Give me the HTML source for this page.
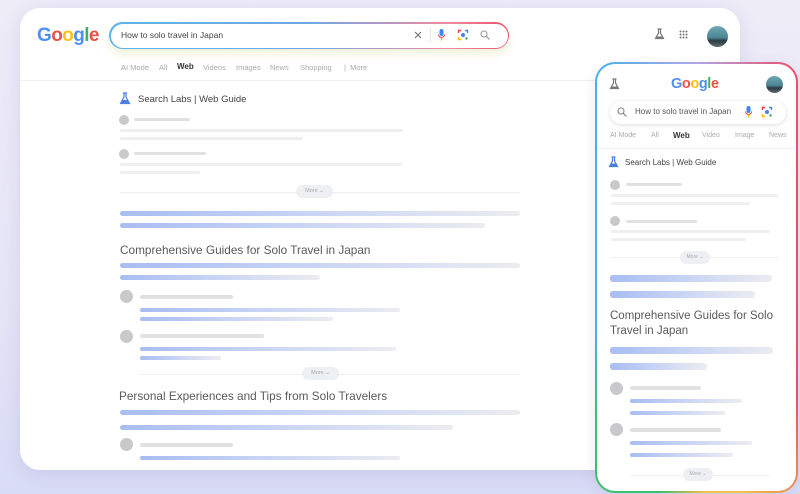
<!DOCTYPE html>
<html><head><meta charset="utf-8"><style>
*{margin:0;padding:0;box-sizing:border-box}
body{width:800px;height:494px;overflow:hidden;position:relative;font-family:"Liberation Sans",sans-serif;background:linear-gradient(180deg,#eeecf7 0%,#e6e5f6 60%,#d9dcf6 100%)}
.a{position:absolute}
.card{left:20px;top:8px;width:720px;height:462px;background:#fff;border-radius:20px;box-shadow:0 4px 18px rgba(120,110,190,.18)}
.b{position:absolute;height:5px;border-radius:3px;background:linear-gradient(90deg,#a8bdf2 0%,#c7d3f6 45%,#ececf0 100%)}
.pb{height:7px}
.g{position:absolute;height:4px;border-radius:2px;background:#e1e1e1}
.gl{position:absolute;height:3px;border-radius:2px;background:#efefef}
.c{position:absolute;border-radius:50%;background:#c9c9cb}
.t{position:absolute;white-space:nowrap;color:#aaa;font-size:7.5px}
.h{position:absolute;white-space:nowrap;color:#5a5a5a}
.more{position:absolute;height:13px;border-radius:7px;background:#eeeff2;color:#aaa;font-size:5.5px;text-align:center;line-height:13px}
.line{position:absolute;height:1px;background:#eeeeee}
.goog span{font-weight:bold}
</style></head><body>
<div class="a card"></div>

<div class="a goog" style="left:37px;top:25px;font-size:19px;letter-spacing:-0.6px;opacity:.92"><span style="color:#4285f4">G</span><span style="color:#ea4335">o</span><span style="color:#fbbc05">o</span><span style="color:#4285f4">g</span><span style="color:#34a853">l</span><span style="color:#ea4335">e</span></div>

<div class="a" style="left:109px;top:22px;width:400px;height:27px;border-radius:14px;background:linear-gradient(90deg,#5bb3ea,#6fa8e8 50%,#f08aa0 85%,#e9556b);padding:1.5px;box-shadow:0 4px 8px rgba(120,200,140,.12),0 5px 10px rgba(250,200,90,.15)">
<div style="width:100%;height:100%;background:#fff;border-radius:13px"></div></div>
<div class="h" style="left:121px;top:30px;font-size:8.5px;color:#444">How to solo travel in Japan</div>
<svg class="a" style="left:413px;top:30px" width="10" height="10"><path d="M2 2L8 8M8 2L2 8" stroke="#777" stroke-width="1.2"/></svg>
<div class="a" style="left:430px;top:28px;width:1px;height:14px;background:#e5e5e5"></div>
<svg class="a" style="left:437px;top:28px" width="9" height="14"><rect x="2.5" y="1" width="4" height="7" rx="2" fill="#4285f4"/><path d="M1.5 6.5a3 3 0 0 0 6 0" stroke="#ea4335" fill="none" stroke-width="1"/><path d="M4.5 9.5v3" stroke="#fbbc05" stroke-width="1.2"/></svg>
<svg class="a" style="left:457px;top:29px" width="12" height="12"><path d="M1.5 4V1.5H4" stroke="#ea4335" fill="none" stroke-width="1.4"/><path d="M8 1.5h2.5V4" stroke="#4285f4" fill="none" stroke-width="1.4"/><path d="M1.5 8v2.5H4" stroke="#fbbc05" fill="none" stroke-width="1.4"/><circle cx="6" cy="6" r="2" fill="#4285f4"/><circle cx="9.5" cy="9.5" r="1.2" fill="#34a853"/></svg>
<svg class="a" style="left:479px;top:29px" width="12" height="12"><circle cx="5" cy="5" r="3" stroke="#999" fill="none" stroke-width="1.1"/><path d="M7.3 7.3L10.5 10.5" stroke="#999" stroke-width="1.2"/></svg>

<svg class="a" style="left:654px;top:28px" width="11" height="12"><path d="M3.5 1h4M4.5 1v4L1.5 10.5h8L6.5 5V1" stroke="#777" fill="none" stroke-width="1.2"/><path d="M2.5 8.5h6l1 2h-8z" fill="#777"/></svg>
<svg class="a" style="left:679px;top:30px" width="9" height="9" fill="#777"><circle cx="1.5" cy="1.5" r="1"/><circle cx="4.5" cy="1.5" r="1"/><circle cx="7.5" cy="1.5" r="1"/><circle cx="1.5" cy="4.5" r="1"/><circle cx="4.5" cy="4.5" r="1"/><circle cx="7.5" cy="4.5" r="1"/><circle cx="1.5" cy="7.5" r="1"/><circle cx="4.5" cy="7.5" r="1"/><circle cx="7.5" cy="7.5" r="1"/></svg>
<div class="a" style="left:707px;top:26px;width:21px;height:21px;border-radius:50%;background:linear-gradient(180deg,#6fa8b5 0%,#4d8593 55%,#2c3c44 70%,#5e6a70 100%)"></div>

<div class="t" style="left:121px;top:63px">AI Mode</div>
<div class="t" style="left:159px;top:63px">All</div>
<div class="t" style="left:177px;top:62px;color:#333;font-weight:bold;font-size:8px">Web</div>
<div class="t" style="left:203px;top:63px">Videos</div>
<div class="t" style="left:236px;top:63px">Images</div>
<div class="t" style="left:270px;top:63px">News</div>
<div class="t" style="left:300px;top:63px">Shopping</div>
<div class="t" style="left:344px;top:63px">|&nbsp; More</div>
<div class="line" style="left:20px;top:80px;width:720px;background:#f0f0f0"></div>

<svg class="a" style="left:119px;top:92px" width="12" height="13"><path d="M4 1h4M5 1v4L1.5 11.5h9L7 5V1" stroke="#4a7fe0" fill="none" stroke-width="1.2"/><path d="M3 8h6l1.5 3.5h-9z" fill="#4a7fe0"/></svg>
<div class="h" style="left:138px;top:94px;font-size:9.5px;color:#444">Search Labs | Web Guide</div>

<div class="c" style="left:119px;top:115px;width:10px;height:10px"></div>
<div class="g" style="left:134px;top:118px;width:56px;height:3px"></div>
<div class="gl" style="left:120px;top:129px;width:283px"></div>
<div class="gl" style="left:120px;top:137px;width:183px"></div>
<div class="c" style="left:119px;top:149px;width:10px;height:10px"></div>
<div class="g" style="left:134px;top:152px;width:72px;height:3px"></div>
<div class="gl" style="left:120px;top:163px;width:282px"></div>
<div class="gl" style="left:120px;top:171px;width:80px"></div>

<div class="line" style="left:120px;top:192px;width:400px"></div>
<div class="more" style="left:296px;top:185px;width:37px">More ⌄</div>

<div class="b" style="left:120px;top:211px;width:400px"></div>
<div class="b" style="left:120px;top:223px;width:365px"></div>
<div class="h" style="left:120px;top:243px;font-size:11.8px">Comprehensive Guides for Solo Travel in Japan</div>
<div class="b" style="left:120px;top:263px;width:400px"></div>
<div class="b" style="left:120px;top:275px;width:200px"></div>

<div class="c" style="left:120px;top:290px;width:13px;height:13px"></div>
<div class="g" style="left:140px;top:295px;width:93px"></div>
<div class="b" style="left:140px;top:308px;width:260px;height:4px"></div>
<div class="b" style="left:140px;top:317px;width:193px;height:4px"></div>
<div class="c" style="left:120px;top:330px;width:13px;height:13px"></div>
<div class="g" style="left:140px;top:334px;width:124px"></div>
<div class="b" style="left:140px;top:347px;width:256px;height:4px"></div>
<div class="b" style="left:140px;top:356px;width:81px;height:4px"></div>

<div class="line" style="left:140px;top:374px;width:380px"></div>
<div class="more" style="left:302px;top:367px;width:37px">More ⌄</div>
<div class="h" style="left:119px;top:389px;font-size:11.8px">Personal Experiences and Tips from Solo Travelers</div>
<div class="b" style="left:120px;top:410px;width:400px"></div>
<div class="b" style="left:120px;top:425px;width:333px"></div>
<div class="c" style="left:120px;top:438px;width:13px;height:13px"></div>
<div class="g" style="left:140px;top:443px;width:93px"></div>
<div class="b" style="left:140px;top:456px;width:260px;height:4px"></div>

<!-- phone -->
<div class="a" style="left:595px;top:62px;width:203px;height:431px;border-radius:20px;background:conic-gradient(from 0deg at 50% 50%,#b0a8e8 0deg,#e8506a 25deg,#e8506a 140deg,#f5c040 168deg,#f5c040 178deg,#3cc070 190deg,#3cc070 215deg,#4ab0e8 240deg,#4ab0e8 335deg,#b0a8e8 360deg);box-shadow:0 4px 14px rgba(120,110,190,.15)"></div>
<div class="a" style="left:597px;top:64px;width:199px;height:427px;background:#fff;border-radius:18px"></div>

<svg class="a" style="left:609px;top:78px" width="11" height="12"><path d="M3.5 1h4M4.5 1v4L1.5 10.5h8L6.5 5V1" stroke="#777" fill="none" stroke-width="1.2"/><path d="M2.5 8.5h6l1 2h-8z" fill="#777"/></svg>
<div class="a goog" style="left:671px;top:76px;font-size:14.5px;letter-spacing:-0.4px;opacity:.92"><span style="color:#4285f4">G</span><span style="color:#ea4335">o</span><span style="color:#fbbc05">o</span><span style="color:#4285f4">g</span><span style="color:#34a853">l</span><span style="color:#ea4335">e</span></div>
<div class="a" style="left:766px;top:76px;width:17px;height:17px;border-radius:50%;background:linear-gradient(180deg,#6fa8b5 0%,#4d8593 55%,#2c3c44 70%,#5e6a70 100%)"></div>

<div class="a" style="left:610px;top:101px;width:176px;height:23px;border-radius:12px;background:#fff;box-shadow:0 1px 4px rgba(0,0,0,.14)"></div>
<svg class="a" style="left:616px;top:106px" width="12" height="12"><circle cx="5" cy="5" r="3" stroke="#888" fill="none" stroke-width="1.1"/><path d="M7.3 7.3L10.5 10.5" stroke="#888" stroke-width="1.2"/></svg>
<div class="h" style="left:635px;top:107px;font-size:8px;color:#555">How to solo travel in Japan</div>
<svg class="a" style="left:744px;top:105px" width="9" height="14"><rect x="2.5" y="1" width="4" height="7" rx="2" fill="#4285f4"/><path d="M1.5 6.5a3 3 0 0 0 6 0" stroke="#ea4335" fill="none" stroke-width="1"/><path d="M4.5 9.5v3" stroke="#fbbc05" stroke-width="1.2"/></svg>
<svg class="a" style="left:761px;top:106px" width="12" height="12"><path d="M1.5 4V1.5H4" stroke="#ea4335" fill="none" stroke-width="1.4"/><path d="M8 1.5h2.5V4" stroke="#4285f4" fill="none" stroke-width="1.4"/><path d="M1.5 8v2.5H4" stroke="#fbbc05" fill="none" stroke-width="1.4"/><circle cx="6" cy="6" r="2" fill="#4285f4"/><circle cx="9.5" cy="9.5" r="1.2" fill="#34a853"/></svg>

<div class="t" style="left:610px;top:132px;font-size:7px">AI Mode</div>
<div class="t" style="left:651px;top:132px;font-size:7px">All</div>
<div class="t" style="left:673px;top:131px;color:#333;font-weight:bold;font-size:8px">Web</div>
<div class="t" style="left:702px;top:132px;font-size:7px">Video</div>
<div class="t" style="left:735px;top:132px;font-size:7px">Image</div>
<div class="t" style="left:769px;top:132px;font-size:7px">News</div>
<div class="line" style="left:597px;top:148px;width:199px"></div>

<svg class="a" style="left:608px;top:156px" width="11" height="12"><path d="M3.5 1h4M4.5 1v4L1.5 10.5h8L6.5 5V1" stroke="#4a7fe0" fill="none" stroke-width="1.2"/><path d="M2.5 7.5h6l1.5 3.5h-9z" fill="#4a7fe0"/></svg>
<div class="h" style="left:625px;top:158px;font-size:8px;color:#444">Search Labs | Web Guide</div>

<div class="c" style="left:610px;top:180px;width:10px;height:10px"></div>
<div class="g" style="left:626px;top:183px;width:56px;height:3px"></div>
<div class="gl" style="left:611px;top:194px;width:167px"></div>
<div class="gl" style="left:611px;top:202px;width:139px"></div>
<div class="c" style="left:610px;top:216px;width:10px;height:10px"></div>
<div class="g" style="left:626px;top:220px;width:71px;height:3px"></div>
<div class="gl" style="left:611px;top:230px;width:159px"></div>
<div class="gl" style="left:611px;top:238px;width:135px"></div>
<div class="line" style="left:611px;top:257px;width:168px"></div>
<div class="more" style="left:680px;top:251px;width:30px;font-size:5px">More ⌄</div>

<div class="b pb" style="left:610px;top:275px;width:162px"></div>
<div class="b pb" style="left:610px;top:291px;width:145px"></div>
<div class="h" style="left:610px;top:309px;font-size:11.5px;line-height:14.5px">Comprehensive Guides for Solo<br>Travel in Japan</div>
<div class="b pb" style="left:610px;top:347px;width:163px"></div>
<div class="b pb" style="left:610px;top:363px;width:97px"></div>

<div class="c" style="left:610px;top:382px;width:13px;height:13px"></div>
<div class="g" style="left:630px;top:386px;width:71px"></div>
<div class="b" style="left:630px;top:399px;width:112px;height:4px"></div>
<div class="b" style="left:630px;top:411px;width:95px;height:4px"></div>
<div class="c" style="left:610px;top:423px;width:13px;height:13px"></div>
<div class="g" style="left:630px;top:428px;width:91px"></div>
<div class="b" style="left:630px;top:441px;width:122px;height:4px"></div>
<div class="b" style="left:630px;top:453px;width:103px;height:4px"></div>
<div class="line" style="left:630px;top:475px;width:140px"></div>
<div class="more" style="left:683px;top:468px;width:30px;font-size:5px">More ⌄</div>
</body></html>
